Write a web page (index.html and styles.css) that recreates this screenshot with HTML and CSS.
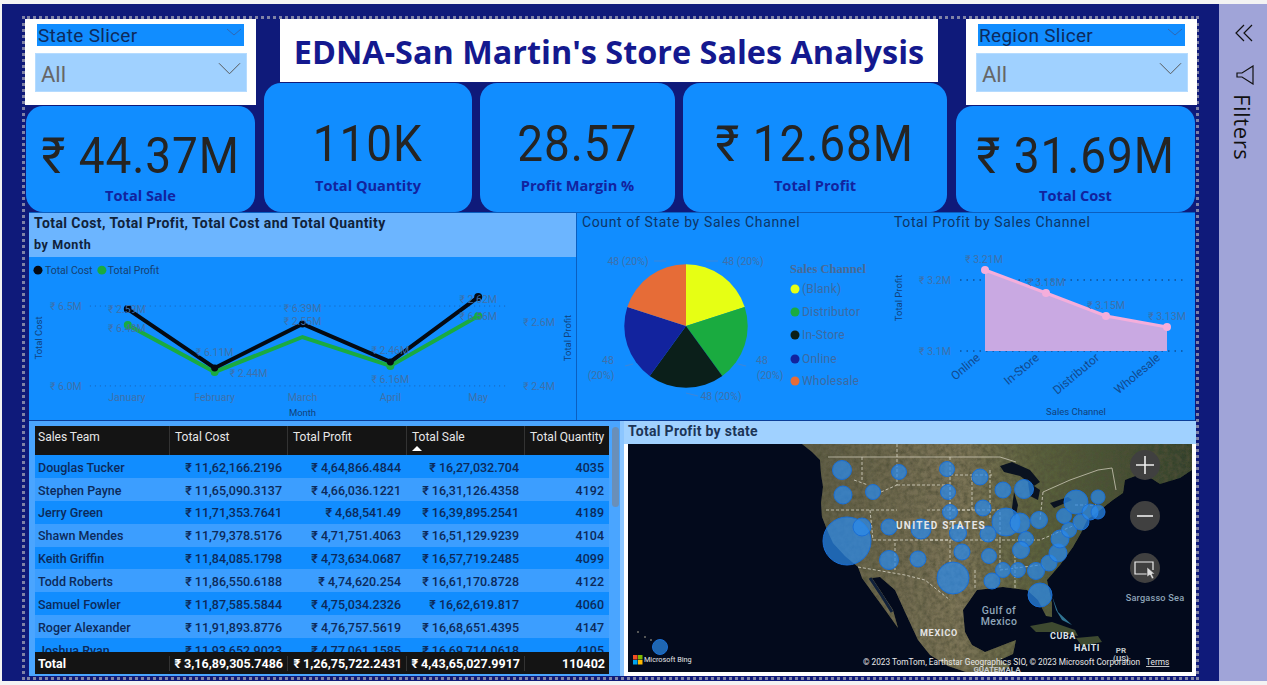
FILE: index.html
```html
<!DOCTYPE html>
<html lang="en">
<head>
  <meta charset="UTF-8">
  <title>EDNA-San Martin's Store Sales Analysis</title>
  <link rel="stylesheet" href="styles.css">
</head>
<body>
  <div class="app">
    <div class="canvas">
      <div class="frame">

        <!-- slicers, title and cards -->
        <div class="top-row">
          <div class="side-col">
            <div class="slicer">
              <div class="slicer-head"><span>State Slicer</span>
                <svg class="chev-small" viewBox="0 0 16 8"><path d="M1 1l7 6 7-6"/></svg>
              </div>
              <div class="slicer-box"><span>All</span>
                <svg class="chev-big" viewBox="0 0 24 13"><path d="M1 1l11 11L23 1"/></svg>
              </div>
            </div>
            <div class="kpi kpi-left">
              <div class="kpi-value">₹ 44.37M</div>
              <div class="kpi-label">Total Sale</div>
            </div>
          </div>

          <div class="mid-col">
            <h1 class="title">EDNA-San Martin's Store Sales Analysis</h1>
            <div class="kpi-row">
              <div class="kpi kpi-qty">
                <div class="kpi-value">110K</div>
                <div class="kpi-label">Total Quantity</div>
              </div>
              <div class="kpi kpi-margin">
                <div class="kpi-value">28.57</div>
                <div class="kpi-label">Profit Margin %</div>
              </div>
              <div class="kpi kpi-profit">
                <div class="kpi-value">₹ 12.68M</div>
                <div class="kpi-label">Total Profit</div>
              </div>
            </div>
          </div>

          <div class="side-col side-right">
            <div class="slicer slicer-right">
              <div class="slicer-head"><span>Region Slicer</span>
                <svg class="chev-small" viewBox="0 0 16 8"><path d="M1 1l7 6 7-6"/></svg>
              </div>
              <div class="slicer-box"><span>All</span>
                <svg class="chev-big" viewBox="0 0 24 13"><path d="M1 1l11 11L23 1"/></svg>
              </div>
            </div>
            <div class="kpi kpi-right">
              <div class="kpi-value">₹ 31.69M</div>
              <div class="kpi-label">Total Cost</div>
            </div>
          </div>
        </div>

        <!-- charts -->
        <div class="chart-row">
          <div class="line-panel">
            <div class="line-head">
              <div>Total Cost, Total Profit, Total Cost and Total Quantity</div>
              <div class="line-head-sub">by Month</div>
            </div>
            <svg class="line-svg" viewBox="29 257 548 163">
              <circle cx="38" cy="270" r="4.5" class="c-black"/>
              <text x="45" y="274" class="t-legend">Total Cost</text>
              <circle cx="102" cy="270" r="4.5" class="c-green"/>
              <text x="108" y="274" class="t-legend">Total Profit</text>

              <path d="M90 306H510M90 386H510" class="grid-dots"/>
              <text x="66" y="310" class="t-axis mid">₹ 6.5M</text>
              <text x="66" y="390" class="t-axis mid">₹ 6.0M</text>
              <text x="540" y="326" class="t-axis mid">₹ 2.6M</text>
              <text x="540" y="390" class="t-axis mid">₹ 2.4M</text>
              <text transform="translate(42 338) rotate(-90)" class="t-title mid">Total Cost</text>
              <text transform="translate(572 338) rotate(-90)" class="t-title mid">Total Profit</text>

              <polyline points="128,325 215,372 303,337 391,366 479,316" class="line-green"/>
              <polyline points="128,309 215,368 303,324 391,362 479,297" class="line-black"/>
              <circle cx="128" cy="325" r="4" class="c-green"/>
              <circle cx="215" cy="372" r="4" class="c-green"/>
              <circle cx="391" cy="366" r="4" class="c-green"/>
              <circle cx="479" cy="316" r="4" class="c-green"/>
              <circle cx="128" cy="309" r="4" class="c-black"/>
              <circle cx="215" cy="368" r="3.5" class="c-black"/>
              <circle cx="303" cy="324" r="3.5" class="c-black"/>
              <circle cx="391" cy="362" r="3.5" class="c-black"/>
              <circle cx="479" cy="297" r="4" class="c-black"/>

              <text x="127" y="313" class="t-axis mid">₹ 2.59M</text>
              <text x="127" y="332" class="t-axis mid">₹ 6.48M</text>
              <text x="215" y="356" class="t-axis mid">₹ 6.11M</text>
              <text x="249" y="377" class="t-axis mid">₹ 2.44M</text>
              <text x="303" y="312" class="t-axis mid">₹ 6.39M</text>
              <text x="303" y="325" class="t-axis mid">₹ 2.55M</text>
              <text x="391" y="354" class="t-axis mid">₹ 2.46M</text>
              <text x="391" y="383" class="t-axis mid">₹ 6.16M</text>
              <text x="479" y="303" class="t-axis mid">₹ 2.62M</text>
              <text x="479" y="320" class="t-axis mid">₹ 6.56M</text>

              <text x="127" y="401" class="t-axis mid">January</text>
              <text x="215" y="401" class="t-axis mid">February</text>
              <text x="303" y="401" class="t-axis mid">March</text>
              <text x="391" y="401" class="t-axis mid">April</text>
              <text x="479" y="401" class="t-axis mid">May</text>
              <text x="303" y="416" class="t-title mid">Month</text>
            </svg>
          </div>

          <div class="pie-panel">
            <div class="chart-title">Count of State by Sales Channel</div>
            <svg class="pie-svg" viewBox="577 232 311 187">
              <path d="M686 325V263.3A61.7 61.7 0 0 1 744.7 305.9Z" class="s-yellow"/>
              <path d="M686 325L744.7 305.9A61.7 61.7 0 0 1 722.3 374.9Z" class="s-green"/>
              <path d="M686 325L722.3 374.9A61.7 61.7 0 0 1 649.7 374.9Z" class="s-dark"/>
              <path d="M686 325L649.7 374.9A61.7 61.7 0 0 1 627.3 305.9Z" class="s-navy"/>
              <path d="M686 325L627.3 305.9A61.7 61.7 0 0 1 686 263.3Z" class="s-orange"/>
              <path d="M706 260h12M654 260h12M625 365l8-2M738 363l8 2M686 392l12 3" class="leader"/>

              <text x="743" y="264" class="t-axis mid">48 (20%)</text>
              <text x="628" y="264" class="t-axis mid">48 (20%)</text>
              <text x="608" y="363" class="t-axis mid">48</text>
              <text x="601" y="378" class="t-axis mid">(20%)</text>
              <text x="762" y="363" class="t-axis mid">48</text>
              <text x="770" y="378" class="t-axis mid">(20%)</text>
              <text x="721" y="399" class="t-axis mid">48 (20%)</text>

              <text x="790" y="272" class="t-legend-head">Sales Channel</text>
              <circle cx="795" cy="288" r="4.5" class="s-yellow"/>
              <text x="802" y="292" class="t-pie-legend">(Blank)</text>
              <circle cx="795" cy="311" r="4.5" class="s-green"/>
              <text x="802" y="315" class="t-pie-legend">Distributor</text>
              <circle cx="795" cy="334" r="4.5" class="s-dark"/>
              <text x="802" y="338" class="t-pie-legend">In-Store</text>
              <circle cx="795" cy="358" r="4.5" class="s-navy"/>
              <text x="802" y="362" class="t-pie-legend">Online</text>
              <circle cx="795" cy="380" r="4.5" class="s-orange"/>
              <text x="802" y="384" class="t-pie-legend">Wholesale</text>
            </svg>
          </div>

          <div class="area-panel">
            <div class="chart-title">Total Profit by Sales Channel</div>
            <svg class="area-svg" viewBox="888 232 307 187">
              <path d="M960 279H1187M960 350H1187" class="grid-dark"/>
              <path d="M985 269L1046 292L1106 315L1167 326V350H985Z" class="area-fill"/>
              <polyline points="985,269 1046,292 1106,315 1167,326" class="area-line"/>
              <circle cx="985" cy="269" r="4" class="area-dot"/>
              <circle cx="1046" cy="292" r="4" class="area-dot"/>
              <circle cx="1106" cy="315" r="4" class="area-dot"/>
              <circle cx="1167" cy="326" r="4" class="area-dot"/>

              <text x="935" y="283" class="t-axis mid">₹ 3.2M</text>
              <text x="935" y="354" class="t-axis mid">₹ 3.1M</text>
              <text x="984" y="262" class="t-axis mid">₹ 3.21M</text>
              <text x="1046" y="285" class="t-axis mid">₹ 3.18M</text>
              <text x="1106" y="308" class="t-axis mid">₹ 3.15M</text>
              <text x="1167" y="319" class="t-axis mid">₹ 3.13M</text>
              <text transform="translate(902 297) rotate(-90)" class="t-title mid">Total Profit</text>

              <text transform="translate(981 358) rotate(-40)" class="t-cat end">Online</text>
              <text transform="translate(1040 358) rotate(-40)" class="t-cat end">In-Store</text>
              <text transform="translate(1100 358) rotate(-40)" class="t-cat end">Distributor</text>
              <text transform="translate(1161 358) rotate(-40)" class="t-cat end">Wholesale</text>
              <text x="1076" y="414" class="t-title mid">Sales Channel</text>
            </svg>
          </div>
        </div>

        <!-- table and map -->
        <div class="bottom-row">
          <div class="table-panel">
            <div class="tbl">
              <div class="tr th">
                <div>Sales Team</div>
                <div>Total Cost</div>
                <div>Total Profit</div>
                <div class="sorted">Total Sale<svg class="sort-arrow" viewBox="0 0 10 5"><path d="M5 0l5 5H0z"/></svg></div>
                <div>Total Quantity</div>
              </div>
              <div class="tbody">
                <div class="tr"><div>Douglas Tucker</div><div>₹ 11,62,166.2196</div><div>₹ 4,64,866.4844</div><div>₹ 16,27,032.704</div><div>4035</div></div>
                <div class="tr"><div>Stephen Payne</div><div>₹ 11,65,090.3137</div><div>₹ 4,66,036.1221</div><div>₹ 16,31,126.4358</div><div>4192</div></div>
                <div class="tr"><div>Jerry Green</div><div>₹ 11,71,353.7641</div><div>₹ 4,68,541.49</div><div>₹ 16,39,895.2541</div><div>4189</div></div>
                <div class="tr"><div>Shawn Mendes</div><div>₹ 11,79,378.5176</div><div>₹ 4,71,751.4063</div><div>₹ 16,51,129.9239</div><div>4104</div></div>
                <div class="tr"><div>Keith Griffin</div><div>₹ 11,84,085.1798</div><div>₹ 4,73,634.0687</div><div>₹ 16,57,719.2485</div><div>4099</div></div>
                <div class="tr"><div>Todd Roberts</div><div>₹ 11,86,550.6188</div><div>₹ 4,74,620.254</div><div>₹ 16,61,170.8728</div><div>4122</div></div>
                <div class="tr"><div>Samuel Fowler</div><div>₹ 11,87,585.5844</div><div>₹ 4,75,034.2326</div><div>₹ 16,62,619.817</div><div>4060</div></div>
                <div class="tr"><div>Roger Alexander</div><div>₹ 11,91,893.8776</div><div>₹ 4,76,757.5619</div><div>₹ 16,68,651.4395</div><div>4147</div></div>
                <div class="tr"><div>Joshua Ryan</div><div>₹ 11,93,652.9023</div><div>₹ 4,77,061.1585</div><div>₹ 16,69,714.0618</div><div>4105</div></div>
              </div>
              <div class="tr tfoot">
                <div>Total</div>
                <div>₹ 3,16,89,305.7486</div>
                <div>₹ 1,26,75,722.2431</div>
                <div>₹ 4,43,65,027.9917</div>
                <div>110402</div>
              </div>
            </div>
            <div class="scroll-track"><div class="scroll-thumb"></div></div>
          </div>

          <div class="map-panel">
            <div class="map-head">Total Profit by state</div>
            <div class="map-wrap">
              <svg class="map-svg" viewBox="628 444 564 228" preserveAspectRatio="none">
                <defs>
                  <linearGradient id="landGrad" x1="0" y1="0" x2="1" y2="0">
                    <stop offset="0" stop-color="#5d5b44"/>
                    <stop offset="0.4" stop-color="#7d7558"/>
                    <stop offset="0.62" stop-color="#59603c"/>
                    <stop offset="1" stop-color="#33412c"/>
                  </linearGradient>
                  <filter id="speckle" x="0" y="0" width="100%" height="100%">
                    <feTurbulence type="fractalNoise" baseFrequency="0.22" numOctaves="4" seed="4" result="n"/>
                    <feColorMatrix in="n" type="matrix" values="0 0 0 0 0.08  0 0 0 0 0.08  0 0 0 0 0.04  1.5 0 0 0 -0.45" result="dark"/>
                    <feComposite in="dark" in2="SourceGraphic" operator="in" result="clip"/>
                    <feMerge><feMergeNode in="SourceGraphic"/><feMergeNode in="clip"/></feMerge>
                  </filter>
                </defs>

                <rect x="628" y="444" width="564" height="228" class="sea"/>
                <!-- north america, land mass -->
                <path filter="url(#speckle)" fill="url(#landGrad)" d="M802 444L812 452L820 460L821 474L823 487L821 503L822 517L828 532L833 543L845 556L858 567L862 578L872 592L883 607L898 628L893 610L880 590L872 578L880 577L895 590L905 612L918 640L930 655L948 666L966 672H1000L1010 666L1000 660L1013 654L1016 640L1003 645L985 652L972 645L965 632L963 610L977 590L1003 587L1027 590L1038 600L1046 616L1052 617L1052 603L1047 580L1060 565L1073 547L1081 533L1087 520L1100 510L1113 500L1123 493L1125 480L1143 473L1160 484L1180 478L1192 470V444Z"/>
                <path d="M1030 626L1052 622L1075 630L1078 636L1058 632L1036 632Z" class="land-dark"/>
                <path d="M1076 638L1098 636L1102 642L1082 646Z" class="land-dark"/>
                <path d="M1052 596L1058 612L1072 625L1062 620L1056 610Z" class="shallow"/>
                <path d="M1000 466L1012 462L1030 470L1040 482L1034 486L1020 476L1004 472Z" class="lake"/>
                <path d="M1014 492L1018 505L1015 520L1012 508Z" class="lake"/>
                <path d="M1028 482L1040 490L1038 500L1030 496Z" class="lake"/>
                <path d="M1050 503L1068 497L1072 500L1054 508Z" class="lake"/>
                <path d="M870 578L882 596L892 612" class="gulf-cal"/>

                <!-- state borders -->
                <path class="border-main" d="M828 457H1000L1016 462M1043 492L1070 480L1098 470L1112 468L1116 490"/>
                <path class="border-state" d="M862 457V480M897 444V485M826 510H897M897 485H950V510H972M854 480L868 485M881 492L897 485M870 510L873 540M873 540L895 540V570M895 540H950V565M950 475H992M950 457V530M972 510V475M990 470V520M927 510H1000V540H1040L1075 525M930 540H1000M1000 540V570L1040 565M975 570V590M1015 555V590M1043 492L1040 520M1075 505L1096 505M858 567L905 575L925 580L950 600"/>

                <!-- small dots of hawaii -->
                <circle cx="638" cy="632" r="1" class="island"/>
                <circle cx="645" cy="637" r="1" class="island"/>
                <circle cx="651" cy="640" r="1" class="island"/>

                <!-- state bubbles -->
                <g class="bubbles">
                  <circle cx="847" cy="541" r="24"/><circle cx="862" cy="527" r="9"/>
                  <circle cx="842" cy="470" r="9.5"/><circle cx="899" cy="472" r="7.5"/>
                  <circle cx="843" cy="495" r="9"/><circle cx="873" cy="492" r="7.5"/>
                  <circle cx="889" cy="527" r="8"/><circle cx="889" cy="560" r="9.5"/>
                  <circle cx="918" cy="559" r="8"/><circle cx="660" cy="647" r="7.5"/>
                  <circle cx="947" cy="469" r="7.5"/><circle cx="980" cy="477" r="8"/>
                  <circle cx="948" cy="492" r="7.5"/><circle cx="1003" cy="490" r="8"/>
                  <circle cx="1024" cy="489" r="9.5"/><circle cx="950" cy="512" r="7.5"/>
                  <circle cx="983" cy="508" r="8"/><circle cx="1006" cy="522" r="14"/>
                  <circle cx="1020" cy="523" r="10"/><circle cx="1039" cy="520" r="8.5"/>
                  <circle cx="921" cy="529" r="10"/><circle cx="958" cy="533" r="8.5"/>
                  <circle cx="988" cy="534" r="8"/><circle cx="1026" cy="539" r="7.5"/>
                  <circle cx="1021" cy="550" r="8.5"/><circle cx="962" cy="552" r="8"/>
                  <circle cx="989" cy="556" r="7.5"/><circle cx="953" cy="578" r="16"/>
                  <circle cx="992" cy="581" r="8"/><circle cx="1003" cy="570" r="7.5"/>
                  <circle cx="1018" cy="570" r="7.5"/><circle cx="1036" cy="571" r="8.5"/>
                  <circle cx="1049" cy="563" r="8"/><circle cx="1058" cy="553" r="9"/>
                  <circle cx="1060" cy="539" r="9"/><circle cx="1069" cy="530" r="7.5"/>
                  <circle cx="1081" cy="522" r="8"/><circle cx="1064" cy="516" r="7.5"/>
                  <circle cx="1076" cy="502" r="12"/><circle cx="1098" cy="497" r="7"/>
                  <circle cx="1090" cy="512" r="8"/><circle cx="1098" cy="512" r="7"/>
                  <circle cx="1040" cy="595" r="12"/>
                </g>

                <!-- labels on the map -->
                <text x="941" y="529" class="m-country mid">UNITED STATES</text>
                <text x="999" y="614" class="m-sea mid">Gulf of</text>
                <text x="999" y="625" class="m-sea mid">Mexico</text>
                <text x="939" y="636" class="m-mexico mid">MEXICO</text>
                <text x="1063" y="639" class="m-small mid">CUBA</text>
                <text x="1087" y="651" class="m-small mid">HAITI</text>
                <text x="1121" y="653" class="m-tiny mid">PR</text>
                <text x="1121" y="661" class="m-tiny mid">(US)</text>
                <text x="997" y="672" class="m-tiny mid">GUATEMALA</text>
                <text x="1155" y="601" class="m-sargasso mid">Sargasso Sea</text>
                <text x="1140" y="665" class="m-copy end">© 2023 TomTom, Earthstar Geographics SIO, © 2023 Microsoft Corporation</text>
                <text x="1146" y="665" class="m-terms">Terms</text>

                <!-- bing logo -->
                <rect x="633" y="655" width="4.5" height="4.5" class="ms-red"/>
                <rect x="638" y="655" width="4.5" height="4.5" class="ms-green"/>
                <rect x="633" y="660" width="4.5" height="4.5" class="ms-blue"/>
                <rect x="638" y="660" width="4.5" height="4.5" class="ms-yellow"/>
                <text x="644" y="662" class="m-bing">Microsoft Bing</text>

                <!-- zoom and select buttons -->
                <circle cx="1145" cy="465" r="15" class="map-btn"/>
                <path d="M1136 465H1154M1145 456V474" class="map-ico"/>
                <circle cx="1145" cy="516" r="15" class="map-btn"/>
                <path d="M1137 516H1153" class="map-ico"/>
                <circle cx="1145" cy="568" r="15" class="map-btn"/>
                <path d="M1150 574H1135V562H1153V570" class="map-ico-thin"/>
                <path d="M1147 567V577L1150 575L1152 579L1154 578L1152 574H1155Z" class="map-cursor"/>
              </svg>
            </div>
          </div>
        </div>

      </div>
    </div>

    <aside class="filters">
      <svg class="filters-collapse" viewBox="0 0 18 18"><path d="M9 1L1 9l8 8M17 1L9 9l8 8"/></svg>
      <svg class="filters-funnel" viewBox="0 0 18 20"><path d="M17 1V19L6 12H1V8H6Z"/></svg>
      <div class="filters-text">Filters</div>
    </aside>
  </div>
</body>
</html>
```
FILE: styles.css
```css
html, body {
  margin: 0;
  padding: 0;
  height: 685px;
  overflow: hidden;
  background-color: #f3f3f3;
  font-family: Roboto, "Noto Sans", sans-serif;
}
.app {
  display: flex;
  height: 677px;
  margin-top: 4px;
  padding-left: 2px;
}
.canvas {
  width: 1217px;
  box-sizing: border-box;
  padding: 12px 0 0 20px;
  background-color: #0f1a7a;
}
.frame {
  width: 1177px;
  height: 664px;
  box-sizing: border-box;
  border: 3px dotted #7f82a6;
}

/* top row */
.top-row {
  display: flex;
  height: 193px;
}
.side-col {
  width: 231px;
  display: flex;
  flex-direction: column;
  flex-shrink: 0;
}
.side-right {
  width: 241px;
  margin-left: 9px;
}
.mid-col {
  width: 683px;
  margin-left: 8px;
  display: flex;
  flex-direction: column;
}
.slicer {
  height: 86px;
  box-sizing: border-box;
  padding: 5px 9px 0 10px;
  background-color: #fff;
}
.slicer-right {
  margin-left: 10px;
}
.slicer-head {
  height: 22px;
  margin: 0 3px 7px 2px;
  padding-left: 1px;
  display: flex;
  align-items: center;
  justify-content: space-between;
  background-color: #118dff;
  color: #0d2a5c;
  font-size: 19px;
  letter-spacing: 0.3px;
}
.chev-small {
  width: 16px;
  height: 8px;
  margin-right: 2px;
  margin-bottom: 6px;
  fill: none;
  stroke: #2f68b4;
  stroke-width: 1;
}
.slicer-box {
  height: 39px;
  box-sizing: border-box;
  padding: 4px 5px 0;
  display: flex;
  align-items: center;
  justify-content: space-between;
  background-color: #a0d1ff;
  border: 1px solid #b5dbff;
  color: #666;
  font-size: 22px;
}
.chev-big {
  width: 23px;
  height: 13px;
  margin-bottom: 12px;
  fill: none;
  stroke: #555;
  stroke-width: 1;
}
.title {
  height: 63px;
  margin: 0 9px 0 16px;
  display: flex;
  align-items: center;
  justify-content: center;
  background-color: #fff;
  color: #14198f;
  font-family: "Open Sans", sans-serif;
  font-size: 32.4px;
  font-weight: 700;
}
.kpi-row {
  display: flex;
  gap: 8px;
  flex: 1;
  margin-top: 1px;
}
.kpi {
  display: flex;
  flex-direction: column;
  align-items: center;
  background-color: #118dff;
  border-radius: 17px;
  color: #252423;
}
.kpi-left {
  height: 106px;
  margin: 1px 1px 0;
}
.kpi-right {
  height: 106px;
  width: 239px;
  margin-top: 1px;
}
.kpi-qty { width: 208px; }
.kpi-margin { width: 195px; }
.kpi-profit { width: 264px; }
.kpi-value {
  margin-top: 32px;
  font-size: 50px;
  line-height: 58px;
  letter-spacing: 1px;
  transform: scaleX(0.92);
}
.kpi-left .kpi-value, .kpi-right .kpi-value {
  margin-top: 21px;
}
.kpi-label {
  margin-top: 2px;
  color: #12239e;
  font-family: "Open Sans", sans-serif;
  font-size: 14.6px;
  line-height: 20px;
  font-weight: 700;
}
.kpi-left .kpi-label, .kpi-right .kpi-label {
  margin-top: 0;
}

/* charts */
.chart-row {
  display: flex;
  height: 209px;
  margin: 0 1px 0 4px;
  box-sizing: border-box;
  background-color: #118dff;
  border-top: 1px solid #0b5fc0;
  border-bottom: 1px solid #0b3f9a;
}
.line-panel {
  width: 548px;
  border-right: 1px solid #0b5fc0;
  box-sizing: border-box;
}
.line-head {
  height: 44px;
  box-sizing: border-box;
  padding: 0 5px;
  background-color: #6cb5ff;
  color: #10223a;
  font-size: 14px;
  font-weight: 700;
  line-height: 20px;
  letter-spacing: 0.42px;
}
.line-head-sub {
  margin-top: 2px;
  font-size: 12.5px;
  letter-spacing: 0.6px;
}
.line-svg {
  display: block;
  width: 547px;
  height: 163px;
}
.pie-panel {
  width: 311px;
}
.area-panel {
  width: 307px;
}
.chart-title {
  height: 19px;
  padding: 1px 0 0 5px;
  color: #0e3566;
  font-size: 14px;
  letter-spacing: 0.62px;
}
.area-panel .chart-title {
  padding-left: 6px;
}
.pie-svg {
  display: block;
  width: 311px;
  height: 187px;
}
.area-svg {
  display: block;
  width: 307px;
  height: 187px;
}
.mid { text-anchor: middle; }
.end { text-anchor: end; }
.t-legend { font-size: 10.5px; fill: #17406f; }
.t-axis { font-size: 10.5px; fill: #3f70aa; }
.t-title { font-size: 9.5px; fill: #12417a; }
.t-cat { font-size: 12px; fill: #114a8f; }
.t-pie-legend { font-size: 12px; fill: #3d6aa2; letter-spacing: 0.2px; }
.t-legend-head {
  font-family: "Liberation Serif", serif;
  font-size: 12.6px;
  font-weight: 700;
  fill: #4a6a96;
}
.grid-dots {
  fill: none;
  stroke: #1a5fb0;
  stroke-width: 1;
  stroke-dasharray: 1 4;
}
.grid-dark {
  fill: none;
  stroke: #0e3566;
  stroke-width: 1.2;
  stroke-dasharray: 1.5 5;
}
.c-black { fill: #050a12; }
.c-green { fill: #1aab40; }
.line-black, .line-green {
  fill: none;
  stroke-width: 4;
}
.line-black { stroke: #050a12; }
.line-green { stroke: #1aab40; }
.s-yellow { fill: #e6ff14; }
.s-green { fill: #1aab40; }
.s-dark { fill: #0b1f1a; }
.s-navy { fill: #12239e; }
.s-orange { fill: #e66c37; }
.leader {
  fill: none;
  stroke: #3f86d8;
  stroke-width: 1;
}
.area-fill { fill: #c9a9e2; }
.area-line {
  fill: none;
  stroke: #f5aedb;
  stroke-width: 3;
}
.area-dot { fill: #f5aedb; }

/* table */
.bottom-row {
  display: flex;
  height: 255px;
  margin-left: 4px;
}
.table-panel {
  width: 595px;
  box-sizing: border-box;
  padding: 5px 0 0 6px;
  display: flex;
  background-color: #4aa5ff;
}
.tbl {
  width: 574px;
  display: flex;
  flex-direction: column;
  height: 248px;
  font-size: 12.5px;
}
.tr {
  display: grid;
  grid-template-columns: 134px 118px 119px 118px 85px;
  height: 22.9px;
  box-sizing: border-box;
  align-items: center;
  font-weight: 500;
  color: #0c2a5a;
}
.tr > div {
  padding: 0 5px;
  text-align: right;
  white-space: nowrap;
}
.tr > div:first-child {
  padding-left: 3px;
  text-align: left;
}
.tbody {
  height: 197px;
  overflow: hidden;
  flex-shrink: 0;
}
.tbody .tr { padding-top: 1.5px; }
.tbody .tr:nth-child(odd) { background-color: #118dff; }
.tbody .tr:nth-child(even) { background-color: #3c9eff; }
.th {
  height: 29px;
  flex-shrink: 0;
  align-items: stretch;
  background-color: #141414;
  color: #e8e8e8;
  font-size: 12px;
  font-weight: 400;
}
.th > div {
  text-align: left;
  padding-top: 4px;
  border-left: 1px solid #333;
}
.th > div:first-child { border-left: 0; }
.sorted { position: relative; }
.sort-arrow {
  position: absolute;
  left: 5px;
  top: 20px;
  width: 10px;
  height: 5px;
  fill: #fff;
}
.tfoot {
  height: 22px;
  flex-shrink: 0;
  background-color: #141414;
  color: #fff;
  font-weight: 700;
}
.tfoot > div {
  padding: 0 4px 0 0;
  border-left: 1px solid #333;
}
.tfoot > div:first-child {
  padding-left: 3px;
  border-left: 0;
}
.scroll-track {
  width: 12px;
  margin-left: 3px;
  margin-top: -5px;
  box-sizing: border-box;
  border-right: 4px solid #8cc6ff;
  background-color: #4aa5ff;
}
.scroll-thumb {
  width: 7px;
  height: 80px;
  margin-top: 6px;
  border-radius: 4px;
  background-color: #6a8fb8;
}

/* map */
.map-panel {
  width: 572px;
  display: flex;
  flex-direction: column;
  background-color: #fff;
}
.map-head {
  height: 23px;
  box-sizing: border-box;
  padding: 2px 4px;
  background-color: #a0d1ff;
  color: #1c3557;
  font-size: 14px;
  font-weight: 700;
  letter-spacing: 0.3px;
}
.map-wrap {
  padding: 0 4px;
  height: 228px;
}
.map-svg {
  display: block;
  width: 564px;
  height: 228px;
}
.sea { fill: #030a1c; }
.land-dark { fill: #3e4a30; }
.shallow { fill: #3c8fb0; opacity: 0.8; }
.lake { fill: #0a1220; }
.gulf-cal { fill: none; stroke: #10203a; stroke-width: 3; }
.island { fill: #70706a; }
.border-main {
  fill: none;
  stroke: #c9c6b4;
  stroke-width: 1;
  opacity: 0.8;
}
.border-state {
  fill: none;
  stroke: #d8d6c6;
  stroke-width: 0.8;
  stroke-dasharray: 3 2;
}
.bubbles circle {
  fill: #2b8aec;
  fill-opacity: 0.72;
  stroke: #1a6fd6;
  stroke-width: 1;
}
.m-country { font-size: 10px; font-weight: 700; fill: #e6e6e6; letter-spacing: 1.3px; }
.m-mexico { font-size: 9px; font-weight: 700; fill: #e6e6e6; letter-spacing: 0.8px; }
.m-sea { font-size: 10.5px; font-weight: 500; fill: #8fa5b8; letter-spacing: 0.4px; }
.m-sargasso { font-size: 9.2px; font-weight: 500; fill: #8fa5b8; letter-spacing: 0.2px; }
.m-small { font-size: 9px; font-weight: 700; fill: #dfe4e8; letter-spacing: 0.6px; }
.m-tiny { font-size: 8px; font-weight: 700; fill: #c4c9cc; }
.m-copy { font-size: 8.3px; fill: #e8e8e8; }
.m-terms { font-size: 8.3px; fill: #e8e8e8; text-decoration: underline; }
.m-bing { font-size: 7.3px; fill: #e8e8e8; }
.ms-red { fill: #f25022; }
.ms-green { fill: #7fba00; }
.ms-blue { fill: #00a4ef; }
.ms-yellow { fill: #ffb900; }
.map-btn { fill: #404040; }
.map-ico { fill: none; stroke: #eee; stroke-width: 1.6; }
.map-ico-thin { fill: none; stroke: #eee; stroke-width: 1.2; }
.map-cursor { fill: #ddd; stroke: #333; stroke-width: 0.6; }

/* filters pane */
.filters {
  width: 48px;
  display: flex;
  flex-direction: column;
  align-items: center;
  background-color: #a0a4d8;
  color: #111;
}
.filters-collapse {
  width: 18px;
  height: 18px;
  margin: 20px 0 0 2px;
  fill: none;
  stroke: #111;
  stroke-width: 1.2;
}
.filters-funnel {
  width: 18px;
  height: 20px;
  margin: 23px 0 0 4px;
  fill: none;
  stroke: #111;
  stroke-width: 1.2;
}
.filters-text {
  margin-top: 9px;
  margin-left: -1px;
  writing-mode: vertical-rl;
  font-family: "Open Sans", sans-serif;
  font-size: 22px;
  font-weight: 500;
  letter-spacing: 0.6px;
}
```
